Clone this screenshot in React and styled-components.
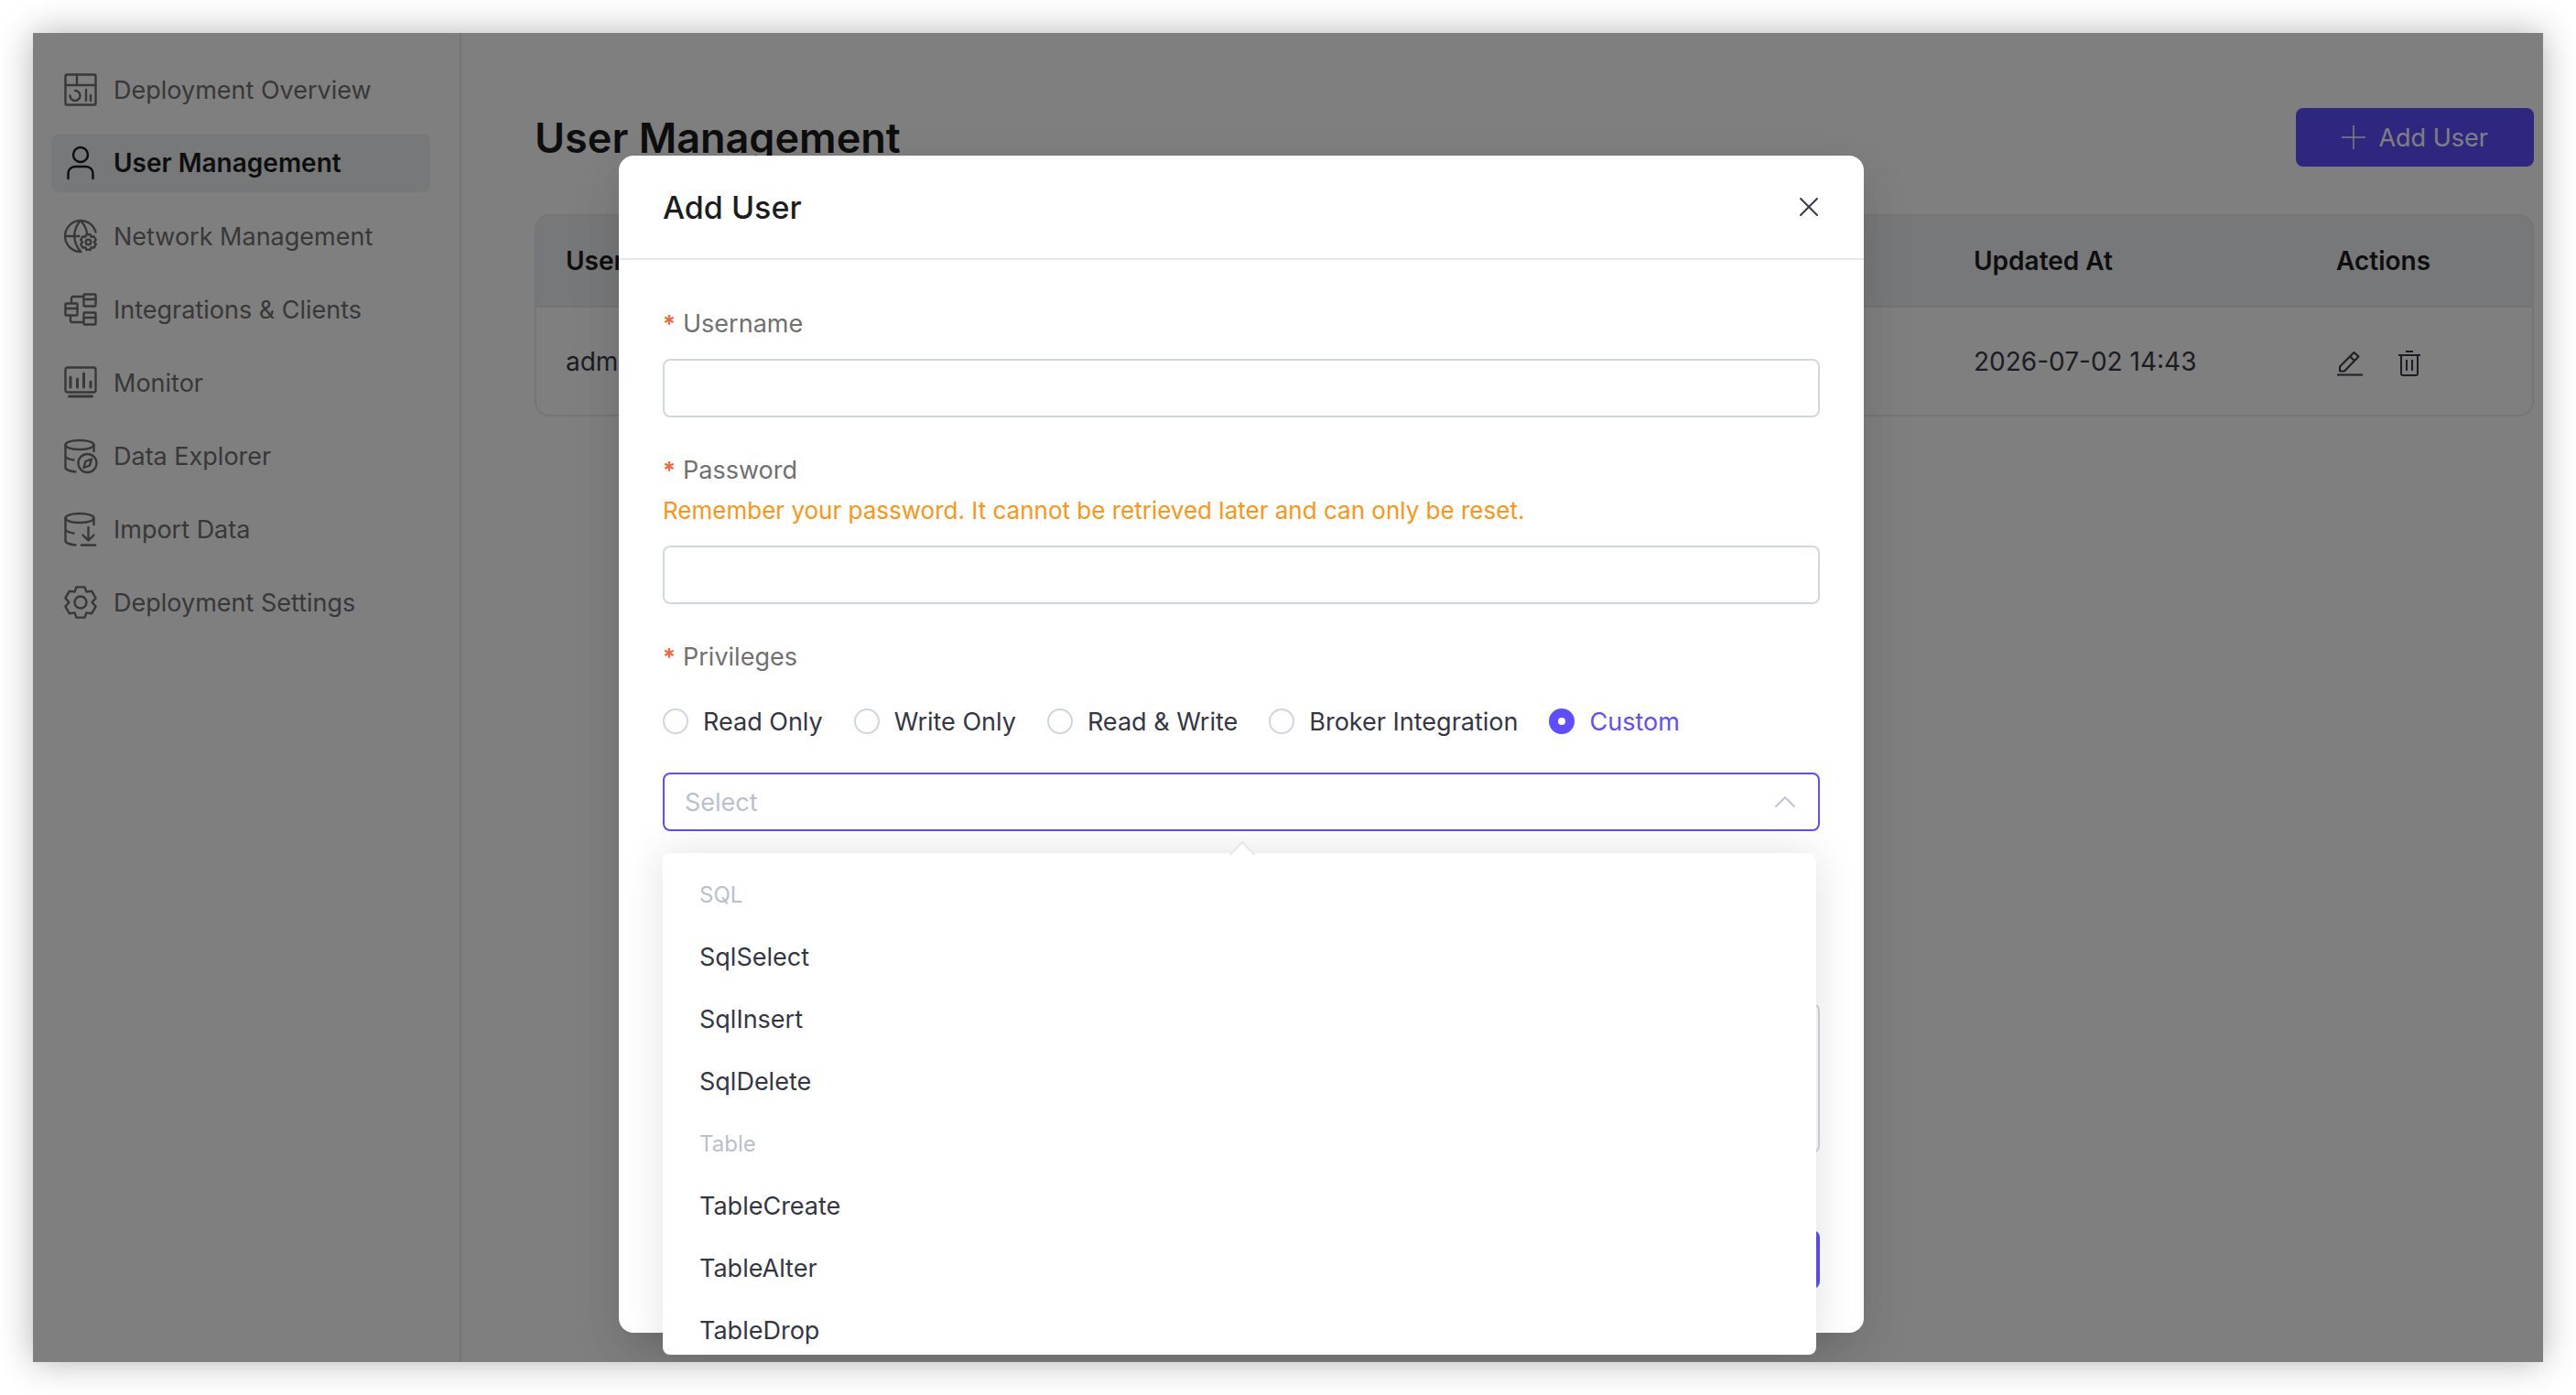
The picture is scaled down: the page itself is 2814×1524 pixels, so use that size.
import styled, { createGlobalStyle } from 'styled-components'

const GlobalStyle = createGlobalStyle`
  * { box-sizing: border-box; }
  body { margin: 0; background: #fff; }
  body, button, input, textarea, select { font-family: Inter, 'Liberation Sans', sans-serif; }
`;

const navItems = [
    { label: 'Deployment Overview', icon: <>
        <rect x="1.5" y="1.5" width="33" height="33" rx="1.5"/>
        <path d="M1.5 13h33M14 1.5V13M12 19a5.5 5.5 0 1 1-5.5 5.5M24 18v12M29 24v6"/>
    </> },
    { label: 'User Management', active: true, icon: <>
        <circle cx="18" cy="9" r="8"/>
        <path d="M4.5 35v-5.5A7.5 7.5 0 0 1 12 22h12a7.5 7.5 0 0 1 7.5 7.5V35"/>
    </> },
    { label: 'Network Management', icon: <>
        <path d="M18.5 35A17 17 0 1 1 34.5 13.5M1 18h15.5M18 1C9 11 9 25 18.5 35M18 1c4 4 6 8 7 13"/>
        <g transform="translate(26.5 24.5)">
            <path d="M-2.3-8.3h4.6l.9 2.6 2.9-.4 2.2 3.8-2 2.3 2 2.3-2.2 3.8-2.9-.4-.9 2.6h-4.6l-.9-2.6-2.9.4-2.2-3.8 2-2.3-2-2.3 2.2-3.8 2.9.4z"/>
            <circle r="2.8"/>
        </g>
    </> },
    { label: 'Integrations & Clients', icon: <>
        <rect x="21.5" y="1.5" width="13" height="13" rx="1"/>
        <rect x="21.5" y="21.5" width="13" height="13" rx="1"/>
        <rect x="1.5" y="11.5" width="13" height="13" rx="1"/>
        <path d="M21.5 7h13M21.5 27h13M1.5 17h13M8 11V6a2 2 0 0 1 2-2h11M7 25v5a2 2 0 0 0 2 2h12"/>
    </> },
    { label: 'Monitor', icon: <>
        <rect x="1.5" y="1.5" width="33" height="27" rx="2"/>
        <path strokeWidth="3" d="M7 12v11M14.5 14v9M21.5 8v15M29 17v6M5.5 33h25"/>
    </> },
    { label: 'Data Explorer', icon: <>
        <ellipse cx="17" cy="6" rx="15.5" ry="5"/>
        <path d="M1.5 6v25c1 3 6 4 11 4.5M1.5 19c2 2 5 3 9 3.5M32.5 6v7"/>
        <circle cx="25.5" cy="26" r="10"/>
        <path d="M30 21.5l-2 7-6.5 2.5 2-7z"/>
    </> },
    { label: 'Import Data', icon: <>
        <ellipse cx="17" cy="6" rx="15.5" ry="5"/>
        <path d="M1.5 6v25c1 3 6 4 11 4.5M1.5 19c2 2 5 3 9 3.5M32.5 6v7"/>
        <path d="M26.5 16v14M20.5 24.5l6 6 6-6M19 35.5h15"/>
    </> },
    { label: 'Deployment Settings', icon: <>
        <g transform="translate(18 18)">
            <path d="M-4.6-16.6h9.2l1.8 5.2 5.8-.8 4.4 7.6-4 4.6 4 4.6-4.4 7.6-5.8-.8-1.8 5.2h-9.2l-1.8-5.2-5.8.8-4.4-7.6 4-4.6-4-4.6 4.4-7.6 5.8.8z"/>
            <circle r="6.5"/>
        </g>
    </> },
]

const privileges = ['Read Only', 'Write Only', 'Read & Write', 'Broker Integration', 'Custom']

const actionGroups = [
    { name: 'SQL', options: ['SqlSelect', 'SqlInsert', 'SqlDelete'] },
    { name: 'Table', options: ['TableCreate', 'TableAlter', 'TableDrop'] },
]

const Sidebar = () => {
    return (
        <SideWrapper>
            {navItems.map(item => (
                <NavLink href="#" key={item.label} $active={item.active}>
                    <Icon viewBox="0 0 36 36">{item.icon}</Icon>
                    {item.label}
                </NavLink>
            ))}
        </SideWrapper>
    )
}

const UserTable = () => {
    return (
        <TableBox>
            <Table>
                <thead>
                    <tr>
                        <Th>Username</Th>
                        <Th $width="396px">Updated At</Th>
                        <Th $width="246px">Actions</Th>
                    </tr>
                </thead>
                <tbody>
                    <tr>
                        <Td>admin</Td>
                        <Td>2026-07-02 14:43</Td>
                        <Td>
                            <RowActions>
                                <IconButton aria-label="Edit">
                                    <SmallIcon viewBox="0 0 28 28">
                                        <path d="M4 22.5v-5L19.5 2l5 4.5L9 22.5zM15 6.5l5 4.5M1 26.5h28"/>
                                    </SmallIcon>
                                </IconButton>
                                <IconButton aria-label="Delete">
                                    <SmallIcon viewBox="0 0 28 28">
                                        <path d="M2 5h24M10 1h8M5 5v20a2 2 0 0 0 2 2h14a2 2 0 0 0 2-2V5M11 10v12M17 10v12"/>
                                    </SmallIcon>
                                </IconButton>
                            </RowActions>
                        </Td>
                    </tr>
                </tbody>
            </Table>
        </TableBox>
    )
}

const PrivilegeSelect = () => {
    return (
        <SelectWrapper>
            <Select aria-label="Custom privileges" defaultValue="">
                <option value="">Select</option>
                {actionGroups.map(group => (
                    <optgroup label={group.name} key={group.name}>
                        {group.options.map(option => <option key={option}>{option}</option>)}
                    </optgroup>
                ))}
            </Select>
            <Chevron viewBox="0 0 22 12">
                <path d="M1 11L11 1l10 10"/>
            </Chevron>
            <Dropdown>
                {actionGroups.map(group => (
                    <div key={group.name}>
                        <GroupName>{group.name}</GroupName>
                        {group.options.map(option => <Option key={option}>{option}</Option>)}
                    </div>
                ))}
            </Dropdown>
        </SelectWrapper>
    )
}

const AddUserDialog = () => {
    return (
        <Dialog role="dialog" aria-label="Add User">
            <DialogHeader>
                <DialogTitle>Add User</DialogTitle>
                <IconButton aria-label="Close">
                    <CloseIcon viewBox="0 0 20 20">
                        <path d="M1 1l18 18M19 1L1 19"/>
                    </CloseIcon>
                </IconButton>
            </DialogHeader>
            <Form>
                <Field>
                    <Label htmlFor="username"><Star>*</Star>Username</Label>
                    <Input id="username"/>
                </Field>
                <Field>
                    <Label htmlFor="password" $tight><Star>*</Star>Password</Label>
                    <Hint>Remember your password. It cannot be retrieved later and can only be reset.</Hint>
                    <Input id="password" type="password"/>
                </Field>
                <Privileges>
                    <Legend><Star>*</Star>Privileges</Legend>
                    <Radios>
                        {privileges.map(name => (
                            <RadioLabel key={name}>
                                <Radio type="radio" name="privilege" defaultChecked={name === 'Custom'}/>
                                <span>{name}</span>
                            </RadioLabel>
                        ))}
                    </Radios>
                    <PrivilegeSelect/>
                </Privileges>
                <TextArea aria-label="Note"/>
                <Footer>
                    <Button type="button" aria-label="Confirm"/>
                </Footer>
            </Form>
        </Dialog>
    )
}

const App = () => {
    return (
        <Page>
            <GlobalStyle/>
            <Window>
                <Sidebar/>
                <Main>
                    <TitleBar>
                        <Title>User Management</Title>
                        <Button>
                            <PlusIcon viewBox="0 0 26 26"><path d="M13 0v26M0 13h26"/></PlusIcon>
                            Add User
                        </Button>
                    </TitleBar>
                    <UserTable/>
                </Main>
                <Overlay>
                    <AddUserDialog/>
                </Overlay>
            </Window>
        </Page>
    )
}

const Page = styled.div`
  min-height: 100vh;
  padding: 36px;
  display: flex;
`;

const Window = styled.div`
  position: relative;
  flex: 1;
  display: flex;
  overflow: hidden;
  background: #fff;
  box-shadow: 0 0 36px rgba(0, 0, 0, 0.3);
`;

const SideWrapper = styled.nav`
  width: 468px;
  padding: 30px 32px 30px 20px;
  display: flex;
  flex-direction: column;
  gap: 16px;
  border-right: 2px solid #ebebeb;
`;

const NavLink = styled.a`
  height: 64px;
  padding: 0 14px;
  display: flex;
  align-items: center;
  gap: 18px;
  border-radius: 8px;
  font-size: ${props => props.$active ? '28px' : '27px'};
  white-space: nowrap;
  text-decoration: none;
  color: ${props => props.$active ? '#1d1d1f' : '#707070'};
  font-weight: ${props => props.$active ? 600 : 400};
  background: ${props => props.$active ? '#eef0f3' : 'transparent'};
`;

const Icon = styled.svg`
  width: 36px;
  height: 36px;
  flex: none;
  overflow: visible;
  fill: none;
  stroke: currentColor;
  stroke-width: 2.4;
  stroke-linecap: round;
  stroke-linejoin: round;
`;

const SmallIcon = styled(Icon)`
  width: 28px;
  height: 28px;
  stroke-width: 2;
  stroke-linecap: butt;
`;

const CloseIcon = styled(Icon)`
  width: 20px;
  height: 20px;
  stroke-width: 2;
`;

const PlusIcon = styled(Icon)`
  width: 26px;
  height: 26px;
  stroke-width: 1.5;
  stroke-linecap: butt;
`;

const Main = styled.main`
  flex: 1;
  padding: 82px 10px 0 80px;
`;

const TitleBar = styled.div`
  height: 64px;
  margin-bottom: 52px;
  display: flex;
  align-items: center;
  justify-content: space-between;
`;

const Title = styled.h1`
  margin: 0;
  font-size: 45px;
  font-weight: 600;
  color: #1d1d1f;
`;

const Button = styled.button`
  height: 64px;
  padding: 0 50px;
  display: flex;
  align-items: center;
  gap: 14px;
  border: none;
  border-radius: 8px;
  background: #5e4eff;
  color: #fff;
  font-size: 27px;
`;

const TableBox = styled.div`
  border: 2px solid #ebebeb;
  border-radius: 16px;
  overflow: hidden;
`;

const Table = styled.table`
  width: 100%;
  table-layout: fixed;
  border-spacing: 0;
  font-size: 28px;
`;

const Th = styled.th`
  width: ${props => props.$width || 'auto'};
  height: 100px;
  padding: 0 32px;
  text-align: left;
  font-weight: 600;
  color: #1d1d1f;
  background: #eef0f3;
  border-bottom: 2px solid #e6e8eb;
`;

const Td = styled.td`
  height: 117px;
  padding: 0 32px;
  color: #383a47;
`;

const RowActions = styled.div`
  padding-top: 4px;
  display: flex;
  gap: 38px;
`;

const IconButton = styled.button`
  padding: 0;
  display: flex;
  border: none;
  background: none;
  color: #383a47;
`;

const Overlay = styled.div`
  position: absolute;
  inset: 0;
  padding: 134px 102px 0 0;
  display: flex;
  justify-content: center;
  align-items: flex-start;
  background: rgba(0, 0, 0, 0.5);
`;

const Dialog = styled.section`
  width: 1360px;
  border-radius: 16px;
  background: #fff;
  box-shadow: 0 24px 64px 8px rgba(0, 0, 0, 0.05), 0 16px 40px rgba(0, 0, 0, 0.08);
`;

const DialogHeader = styled.header`
  height: 114px;
  padding: 0 50px 0 48px;
  display: flex;
  align-items: center;
  justify-content: space-between;
  border-bottom: 2px solid #e8e8e8;
`;

const DialogTitle = styled.h2`
  margin: 0;
  font-size: 34px;
  font-weight: 500;
  color: #1d1d1f;
`;

const Form = styled.form`
  padding: 48px;
`;

const Field = styled.div`
  margin-bottom: 36px;
`;

const Label = styled.label`
  display: block;
  padding-bottom: ${props => props.$tight ? '0' : '16px'};
  font-size: 27px;
  line-height: 44px;
  color: #707070;
`;

const Star = styled.span`
  margin-right: 8px;
  font-size: 26px;
  font-weight: 600;
  line-height: 1;
  color: #f56538;
`;

const Hint = styled.p`
  margin: 0 0 16px;
  font-size: 26px;
  line-height: 44px;
  color: #fa9614;
`;

const Input = styled.input`
  display: block;
  width: 100%;
  height: 64px;
  padding: 0 24px;
  border: 2px solid #d1d5e0;
  border-radius: 8px;
  background: #fff;
  font-size: 27px;
  outline: none;
`;

const Privileges = styled.fieldset`
  margin: 0;
  padding: 0;
  border: none;
`;

const Legend = styled.legend`
  padding: 0;
  font-size: 27px;
  line-height: 44px;
  color: #707070;
`;

const Radios = styled.div`
  height: 96px;
  margin-bottom: 8px;
  display: flex;
  align-items: center;
  gap: 34px;
`;

const RadioLabel = styled.label`
  display: flex;
  align-items: center;
  gap: 16px;
  font-size: 27px;
  white-space: nowrap;
  color: #343643;

  &:has(input:checked) {
    color: #5e4eff;
  }
`;

const Radio = styled.input`
  appearance: none;
  width: 28px;
  height: 28px;
  margin: 0;
  border: 2px solid #d1d5e0;
  border-radius: 50%;

  &:checked {
    border: 10px solid #5e4eff;
  }
`;

const SelectWrapper = styled.div`
  position: relative;
`;

const Select = styled.select`
  appearance: none;
  display: block;
  width: 100%;
  height: 64px;
  padding: 0 22px;
  border: 2px solid #5e4eff;
  border-radius: 8px;
  background: #fff;
  color: #b9bfcd;
  font-size: 27px;
  outline: none;
`;

const Chevron = styled(Icon)`
  position: absolute;
  top: 26px;
  right: 27px;
  width: 22px;
  height: 12px;
  stroke-width: 2;
  stroke: #c0c4d0;
`;

const Dropdown = styled.div`
  position: absolute;
  z-index: 1;
  top: 88px;
  left: 0;
  right: 4px;
  height: 548px;
  padding-top: 12px;
  border-radius: 8px;
  background: #fff;
  box-shadow: 0 0 48px rgba(0, 0, 0, 0.12);

  &::before {
    content: '';
    position: absolute;
    top: -9px;
    left: calc(50% - 7px);
    width: 18px;
    height: 18px;
    border-top: 2px solid #e6e6e6;
    border-left: 2px solid #e6e6e6;
    background: #fff;
    transform: rotate(45deg);
  }
`;

const Option = styled.div`
  padding: 0 40px;
  font-size: 27px;
  line-height: 68px;
  color: #343643;
`;

const GroupName = styled(Option)`
  font-size: 24px;
  color: #b9bfcd;
`;

const TextArea = styled.textarea`
  display: block;
  width: 100%;
  height: 164px;
  margin-top: 188px;
  border: 2px solid #d1d5e0;
  border-radius: 8px;
  resize: none;
`;

const Footer = styled.div`
  margin-top: 84px;
  display: flex;
  justify-content: flex-end;
`;

export default App;
